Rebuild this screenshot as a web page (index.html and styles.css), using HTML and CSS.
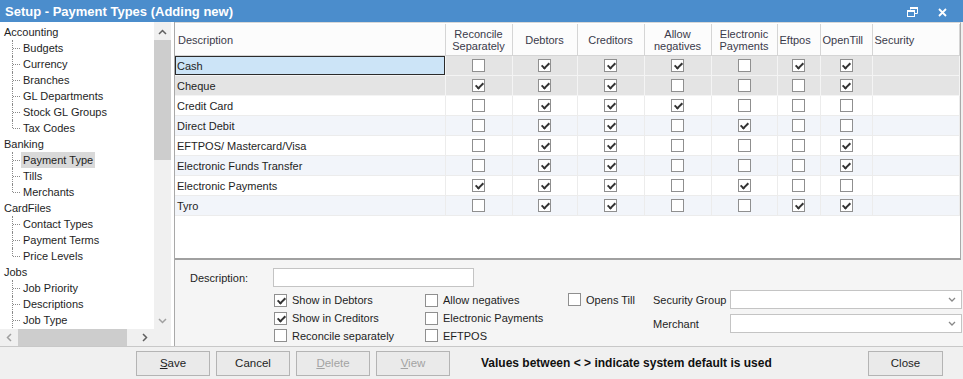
FILE: index.html
```html
<!DOCTYPE html>
<html lang="en">
<head>
  <meta charset="UTF-8">
  <meta name="viewport" content="width=device-width, initial-scale=1.0">
  <title>Setup - Payment Types</title>
  <link rel="stylesheet" href="styles.css">
</head>
<body>
  <div class="window">
    <!-- Barra de titulo -->
    <div class="titlebar">
      <span class="title">Setup - Payment Types (Adding new)</span>
      <div class="title-buttons">
        <svg width="11" height="10" viewBox="0 0 11 10"><path d="M3.5 2.5V0.5H10.5V6.5H7.5" fill="none" stroke="#fff" stroke-width="1"/><rect x="3" y="0" width="8" height="2" fill="#fff"/><rect x="0.5" y="3.5" width="7" height="6" fill="none" stroke="#fff"/><rect x="0" y="3" width="8" height="2" fill="#fff"/></svg>
        <svg width="9" height="9" viewBox="0 0 9 9"><path d="M1 1L8 8M8 1L1 8" stroke="#fff" stroke-width="1.8"/></svg>
      </div>
    </div>

    <div class="main">
      <!-- Arvore de setup -->
      <div class="tree-panel">
        <div class="tree-view">
          <ul class="tree">
            <li class="parent">Accounting
              <ul>
                <li><span>Budgets</span></li>
                <li><span>Currency</span></li>
                <li><span>Branches</span></li>
                <li><span>GL Departments</span></li>
                <li><span>Stock GL Groups</span></li>
                <li><span>Tax Codes</span></li>
              </ul>
            </li>
            <li class="parent">Banking
              <ul>
                <li><span class="selected">Payment Type</span></li>
                <li><span>Tills</span></li>
                <li><span>Merchants</span></li>
              </ul>
            </li>
            <li class="parent">CardFiles
              <ul>
                <li><span>Contact Types</span></li>
                <li><span>Payment Terms</span></li>
                <li><span>Price Levels</span></li>
              </ul>
            </li>
            <li class="parent">Jobs
              <ul>
                <li><span>Job Priority</span></li>
                <li><span>Descriptions</span></li>
                <li class="more"><span>Job Type</span></li>
              </ul>
            </li>
          </ul>
        </div>
        <div class="vscroll">
          <svg class="arrow" width="9" height="6" viewBox="0 0 9 6"><path d="M1 5L4.5 1.5L8 5" fill="none" stroke="#606060" stroke-width="1.5"/></svg>
          <div class="vthumb"></div>
          <svg class="arrow down" width="9" height="6" viewBox="0 0 9 6"><path d="M1 1L4.5 4.5L8 1" fill="none" stroke="#a0a0a0" stroke-width="1.5"/></svg>
        </div>
        <div class="hscroll">
          <svg width="6" height="9" viewBox="0 0 6 9"><path d="M5 1L1.5 4.5L5 8" fill="none" stroke="#a0a0a0" stroke-width="1.5"/></svg>
          <div class="hthumb"></div>
          <svg width="6" height="9" viewBox="0 0 6 9"><path d="M1 1L4.5 4.5L1 8" fill="none" stroke="#606060" stroke-width="1.5"/></svg>
        </div>
        <div class="corner"></div>
      </div>

      <div class="content">
        <!-- Grade de tipos de pagamento -->
        <div class="grid-wrap">
          <table class="grid">
            <colgroup>
              <col style="width:270px"><col style="width:67px"><col style="width:65px"><col style="width:67px">
              <col style="width:67px"><col style="width:66px"><col style="width:43px"><col style="width:52px"><col>
            </colgroup>
            <thead>
              <tr>
                <th class="desc">Description</th>
                <th>Reconcile<br>Separately</th>
                <th>Debtors</th>
                <th>Creditors</th>
                <th>Allow<br>negatives</th>
                <th>Electronic<br>Payments</th>
                <th class="left">Eftpos</th>
                <th class="left">OpenTill</th>
                <th class="left">Security</th>
              </tr>
            </thead>
            <tbody>
              <tr class="grey">
                <td class="desc focus">Cash</td>
                <td><span class="cb"></span></td>
                <td><span class="cb on"></span></td>
                <td><span class="cb on"></span></td>
                <td><span class="cb on"></span></td>
                <td><span class="cb"></span></td>
                <td><span class="cb on"></span></td>
                <td><span class="cb on"></span></td>
                <td></td>
              </tr>
              <tr class="grey">
                <td class="desc">Cheque</td>
                <td><span class="cb on"></span></td>
                <td><span class="cb on"></span></td>
                <td><span class="cb on"></span></td>
                <td><span class="cb"></span></td>
                <td><span class="cb"></span></td>
                <td><span class="cb"></span></td>
                <td><span class="cb on"></span></td>
                <td></td>
              </tr>
              <tr>
                <td class="desc">Credit Card</td>
                <td><span class="cb"></span></td>
                <td><span class="cb on"></span></td>
                <td><span class="cb on"></span></td>
                <td><span class="cb on"></span></td>
                <td><span class="cb"></span></td>
                <td><span class="cb"></span></td>
                <td><span class="cb"></span></td>
                <td></td>
              </tr>
              <tr class="alt">
                <td class="desc">Direct Debit</td>
                <td><span class="cb"></span></td>
                <td><span class="cb on"></span></td>
                <td><span class="cb on"></span></td>
                <td><span class="cb"></span></td>
                <td><span class="cb on"></span></td>
                <td><span class="cb"></span></td>
                <td><span class="cb"></span></td>
                <td></td>
              </tr>
              <tr>
                <td class="desc">EFTPOS/ Mastercard/Visa</td>
                <td><span class="cb"></span></td>
                <td><span class="cb on"></span></td>
                <td><span class="cb on"></span></td>
                <td><span class="cb"></span></td>
                <td><span class="cb"></span></td>
                <td><span class="cb"></span></td>
                <td><span class="cb on"></span></td>
                <td></td>
              </tr>
              <tr class="alt">
                <td class="desc">Electronic Funds Transfer</td>
                <td><span class="cb"></span></td>
                <td><span class="cb on"></span></td>
                <td><span class="cb on"></span></td>
                <td><span class="cb"></span></td>
                <td><span class="cb"></span></td>
                <td><span class="cb"></span></td>
                <td><span class="cb on"></span></td>
                <td></td>
              </tr>
              <tr>
                <td class="desc">Electronic Payments</td>
                <td><span class="cb on"></span></td>
                <td><span class="cb on"></span></td>
                <td><span class="cb on"></span></td>
                <td><span class="cb"></span></td>
                <td><span class="cb on"></span></td>
                <td><span class="cb"></span></td>
                <td><span class="cb"></span></td>
                <td></td>
              </tr>
              <tr class="alt">
                <td class="desc">Tyro</td>
                <td><span class="cb"></span></td>
                <td><span class="cb on"></span></td>
                <td><span class="cb on"></span></td>
                <td><span class="cb"></span></td>
                <td><span class="cb"></span></td>
                <td><span class="cb on"></span></td>
                <td><span class="cb on"></span></td>
                <td></td>
              </tr>
            </tbody>
          </table>
        </div>

        <!-- Formulario de edicao -->
        <div class="form-panel">
          <div class="desc-row">
            <label class="desc-label">Description:</label>
            <div class="text-input"></div>
          </div>
          <div class="lower">
            <div class="check-col col1">
              <div class="check"><span class="cb on"></span>Show in Debtors</div>
              <div class="check"><span class="cb on"></span>Show in Creditors</div>
              <div class="check"><span class="cb"></span>Reconcile separately</div>
            </div>
            <div class="check-col col2">
              <div class="check"><span class="cb"></span>Allow negatives</div>
              <div class="check"><span class="cb"></span>Electronic Payments</div>
              <div class="check"><span class="cb"></span>EFTPOS</div>
            </div>
            <div class="check-col col3">
              <div class="check"><span class="cb"></span>Opens Till</div>
            </div>
            <div class="select-col">
              <div class="select-row">
                <label>Security Group</label>
                <div class="select">
                  <svg width="8" height="5" viewBox="0 0 8 5"><path d="M1 1L4 4L7 1" fill="none" stroke="#888" stroke-width="1.3"/></svg>
                </div>
              </div>
              <div class="select-row">
                <label>Merchant</label>
                <div class="select">
                  <svg width="8" height="5" viewBox="0 0 8 5"><path d="M1 1L4 4L7 1" fill="none" stroke="#888" stroke-width="1.3"/></svg>
                </div>
              </div>
            </div>
          </div>
        </div>
      </div>
    </div>

    <!-- Botoes -->
    <div class="footer">
      <button class="btn"><u>S</u>ave</button>
      <button class="btn">Cancel</button>
      <button class="btn" disabled><u>D</u>elete</button>
      <button class="btn" disabled><u>V</u>iew</button>
      <span class="hint">Values between &lt; &gt; indicate system default is used</span>
      <button class="btn close">Close</button>
    </div>
  </div>
</body>
</html>
```

FILE: styles.css
```css
body {
  margin: 0;
  padding: 0;
  font-family: "Liberation Sans", Arial, sans-serif;
  font-size: 11px;
  color: #1e1e1e;
  background-color: #f0f0f0;
}
.window {
  width: 963px;
  height: 379px;
  display: flex;
  flex-direction: column;
  background-color: #f0f0f0;
  overflow: hidden;
}
.titlebar {
  height: 22px;
  flex-shrink: 0;
  display: flex;
  align-items: center;
  justify-content: space-between;
  padding: 0 16px 0 5px;
  background-color: #4b8dcc;
  color: white;
}
.title {
  font-weight: bold;
  font-size: 13px;
}
.title-buttons {
  display: flex;
  align-items: center;
  gap: 20px;
  padding-top: 2px;
}

/* area principal */
.main {
  display: flex;
  height: 324px;
}
.tree-panel {
  width: 174px;
  flex-shrink: 0;
  display: grid;
  grid-template-columns: 154px 17px 3px;
  grid-template-rows: 307px 17px;
  background-color: white;
}
.tree-view {
  overflow: hidden;
  padding-top: 2px;
}
.tree, .tree ul {
  list-style: none;
  margin: 0;
  padding: 0;
}
.tree li {
  line-height: 16px;
  white-space: nowrap;
}
.tree .parent {
  padding-left: 4px;
}
.tree ul {
  margin-left: -4px;
}
.tree ul li {
  position: relative;
  padding-left: 21px;
}
.tree ul li span {
  padding: 0 2px;
  display: inline-block;
}
.tree ul li::before {
  content: "";
  position: absolute;
  left: 12px;
  top: 0;
  bottom: 0;
  border-left: 1px dotted #8a8a8a;
}
.tree ul li:last-child::before {
  bottom: 8px;
}
.tree ul li.more::before {
  bottom: 0;
}
.tree ul li::after {
  content: "";
  position: absolute;
  left: 13px;
  top: 8px;
  width: 7px;
  border-top: 1px dotted #8a8a8a;
}
.tree .selected {
  background-color: #d9d9d9;
}
.vscroll {
  grid-column: 2;
  grid-row: 1;
  background-color: #f0f0f0;
  display: flex;
  flex-direction: column;
  align-items: center;
}
.vscroll .arrow {
  margin: 7px 0 5px;
}
.vscroll .down {
  margin: auto 0 5px;
}
.vthumb {
  width: 17px;
  height: 120px;
  background-color: #cdcdcd;
}
.hscroll {
  grid-column: 1;
  grid-row: 2;
  background-color: #f0f0f0;
  display: flex;
  align-items: center;
  padding: 0 6px;
}
.hthumb {
  width: 109px;
  height: 17px;
  margin: 0 auto 0 6px;
  background-color: #cdcdcd;
}
.corner {
  grid-column: 2;
  grid-row: 2;
  background-color: #f0f0f0;
}

.content {
  flex: 1;
  display: flex;
  flex-direction: column;
  border-left: 1px solid #a9a9a9;
}
.grid-wrap {
  height: 234px;
  padding-top: 1px;
  margin-right: 2px;
  background-color: white;
  border-top: 1px solid #d8d8d8;
  border-right: 1px solid #a9a9a9;
  border-bottom: 2px solid #a0a0a0;
}
.grid {
  width: 785px;
  border-collapse: collapse;
  table-layout: fixed;
}
.grid th {
  height: 31px;
  padding: 0;
  font-weight: normal;
  line-height: 12px;
  color: #3a3a4a;
  background-color: #fcfcfc;
  border-right: 1px solid #d5d5d5;
  border-bottom: 1px solid #d5d5d5;
}
.grid th.desc {
  text-align: left;
  padding-left: 3px;
}
.grid th.left {
  text-align: left;
  padding-left: 2px;
}
.grid td {
  height: 19px;
  padding: 0;
  text-align: center;
  border-right: 1px solid #ececec;
  border-bottom: 1px solid #ececec;
}
.grid td.desc {
  text-align: left;
  padding-left: 2px;
}
.grid tr.grey td {
  background-color: #e4e4e4;
  border-right-color: #f4f4f4;
  border-bottom-color: #f4f4f4;
}
.grid tr.alt td {
  background-color: #f2f5fa;
}
.grid td.focus {
  background-color: #cce4f7 !important;
  box-shadow: inset 0 0 0 1px #2b2b2b;
}
.cb {
  display: inline-block;
  width: 13px;
  height: 13px;
  box-sizing: border-box;
  border: 1px solid #8f8f8f;
  background-color: white;
  vertical-align: middle;
  position: relative;
}
.cb.on::after {
  content: "";
  position: absolute;
  left: 3.5px;
  top: 1px;
  width: 3px;
  height: 6px;
  border: solid #333;
  border-width: 0 2px 2px 0;
  transform: rotate(45deg);
}

/* formulario */
.form-panel {
  flex: 1;
  background-color: #f5f5f5;
  padding: 8px 0 0 15px;
}
.desc-row {
  display: flex;
  align-items: center;
  height: 19px;
}
.desc-label {
  width: 83px;
}
.text-input {
  width: 199px;
  height: 17px;
  border: 1px solid #c4c4c4;
  background-color: white;
}
.lower {
  display: flex;
  margin-top: 4px;
  padding-left: 84px;
}
.check-col {
  display: flex;
  flex-direction: column;
}
.col1 { width: 151px; }
.col2 { width: 143px; }
.col3 { width: 85px; }
.check {
  display: flex;
  align-items: center;
  height: 18px;
}
.check:last-child {
  height: 17px;
}
.check .cb {
  margin-right: 5px;
}
.select-col {
  flex: 1;
  display: flex;
  flex-direction: column;
  gap: 5px;
  margin-top: -1px;
  padding-right: 1px;
}
.select-row {
  display: flex;
  align-items: center;
}
.select-row label {
  width: 77px;
}
.select {
  flex: 1;
  height: 17px;
  border: 1px solid #c4c4c4;
  background-color: white;
  display: flex;
  align-items: center;
  justify-content: flex-end;
  padding-right: 5px;
}

/* rodape */
.footer {
  flex: 1;
  display: flex;
  align-items: center;
  border-top: 1px solid #c8c8c8;
  padding: 0 20px 0 136px;
}
.btn {
  width: 74px;
  height: 25px;
  margin-right: 6px;
  font-family: "Liberation Sans", Arial, sans-serif;
  font-size: 11.5px;
  color: #1e1e1e;
  background-color: #eaeaea;
  border: 1px solid #b4b4b4;
  padding: 0;
}
.btn:disabled {
  color: #a3a3a3;
}
.hint {
  margin-left: 25px;
  font-weight: bold;
  font-size: 12px;
  color: #111;
}
.close {
  margin: 0 0 0 auto;
  width: 75px;
}
```
